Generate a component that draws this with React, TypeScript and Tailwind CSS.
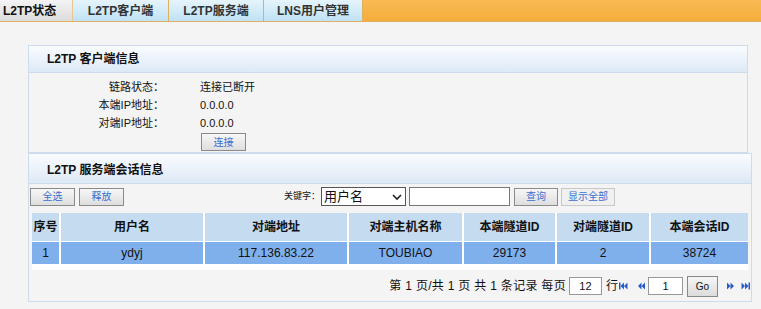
import React from "react";

const font = { fontFamily: '"Liberation Sans", "Noto Sans CJK SC", sans-serif' };

function Btn({ children, w, light }: { children: React.ReactNode; w: string; light?: boolean }) {
  return (
    <div
      className={`${w} h-[18px] flex items-center justify-center text-[10px] text-[#3a6fd0] border ${
        light ? "border-[#c8c8c8] bg-[#f0f0f0]" : "border-[#8a8a8a] bg-gradient-to-b from-[#f7f7f7] to-[#dedede]"
      }`}
    >
      {children}
    </div>
  );
}

function NavIcon({ kind }: { kind: "first" | "prev" | "next" | "last" }) {
  const c = "#2a5cc8";
  return (
    <svg width="9" height="8" viewBox="0 0 9 8">
      {kind === "first" && (
        <>
          <rect x="0" y="0.5" width="1.5" height="7" fill={c} />
          <path d="M5 0.5 L1.5 4 L5 7.5Z M8.5 0.5 L5 4 L8.5 7.5Z" fill={c} />
        </>
      )}
      {kind === "prev" && <path d="M4.5 0.5 L1 4 L4.5 7.5Z M8 0.5 L4.5 4 L8 7.5Z" fill={c} />}
      {kind === "next" && <path d="M1 0.5 L4.5 4 L1 7.5Z M4.5 0.5 L8 4 L4.5 7.5Z" fill={c} />}
      {kind === "last" && (
        <>
          <path d="M0.5 0.5 L4 4 L0.5 7.5Z M4 0.5 L7.5 4 L4 7.5Z" fill={c} />
          <rect x="7.5" y="0.5" width="1.5" height="7" fill={c} />
        </>
      )}
    </svg>
  );
}

export default function App() {
  const cols = [
    { w: "w-[29px]", t: "序号" },
    { w: "w-[144px]", t: "用户名" },
    { w: "w-[144px]", t: "对端地址" },
    { w: "w-[115px]", t: "对端主机名称" },
    { w: "w-[93px]", t: "本端隧道ID" },
    { w: "w-[94px]", t: "对端隧道ID" },
    { w: "flex-1", t: "本端会话ID" },
  ];
  const row = ["1", "ydyj", "117.136.83.22", "TOUBIAO", "29173", "2", "38724"];
  return (
    <div className="w-[761px] h-[309px] bg-[#f4f4f4] overflow-hidden text-[12px] text-[#111]" style={font}>
      {/* tabs */}
      <div className="flex h-[22px] border-b border-[#e0b060] bg-gradient-to-b from-[#f8ba52] to-[#f5ae3c]">
        <div className="w-[73px] flex items-center pl-[3px] font-bold text-[12px] bg-gradient-to-b from-[#f4f4f4] to-[#dcdcdc] border-r border-[#e8c890]">
          L2TP状态
        </div>
        {[
          ["w-[96px]", "L2TP客户端"],
          ["w-[95px]", "L2TP服务端"],
          ["w-[99px]", "LNS用户管理"],
        ].map(([w, t]) => (
          <div
            key={t}
            className={`${w} flex items-center justify-center font-bold text-[12px] text-[#333] bg-gradient-to-b from-[#e6f4fc] to-[#bfe2f4] border-r border-[#e0b060]`}
          >
            {t}
          </div>
        ))}
      </div>

      <div className="pl-[28px] pt-[23px]">
        {/* panel 1 */}
        <div className="mr-[13px] h-[108px] border border-[#cddcec] flex flex-col">
          <div className="h-[27px] flex items-center pl-[18px] font-bold text-[12px] bg-gradient-to-b from-[#fafcfe] to-[#dde9f7] border-b border-[#cddcec]">
            L2TP 客户端信息
          </div>
          <div className="pt-[5px] text-[11px]">
            {[
              ["链路状态：", "连接已断开"],
              ["本端IP地址：", "0.0.0.0"],
              ["对端IP地址：", "0.0.0.0"],
            ].map(([a, b]) => (
              <div key={a} className="flex h-[18px] items-center">
                <div className="w-[135px] text-right">{a}</div>
                <div className="pl-[36px]">{b}</div>
              </div>
            ))}
            <div className="pl-[172px] pt-[1px]">
              <Btn w="w-[45px]">连接</Btn>
            </div>
          </div>
        </div>

        {/* panel 2 */}
        <div className="mr-[9px] h-[149px] border border-[#cddcec] flex flex-col">
          <div className="h-[30px] flex items-center pl-[18px] pt-[2px] font-bold text-[12px] bg-gradient-to-b from-[#fafcfe] to-[#dde9f7] border-b border-[#cddcec]">
            L2TP 服务端会话信息
          </div>
          <div className="flex items-center h-[25px] pl-[1px]">
            <Btn w="w-[45px]">全选</Btn>
            <div className="w-[4px]" />
            <Btn w="w-[45px]">释放</Btn>
            <div className="ml-[160px] text-[9px]">关键字：</div>
            <div className="ml-[1px] w-[85px] h-[19px] border border-[#555] bg-white flex items-center justify-between px-[2px] text-[13px]">
              <span>用户名</span>
              <svg width="12" height="8" viewBox="0 0 12 8">
                <path d="M2 2 L6 6 L10 2" stroke="#222" strokeWidth="1.6" fill="none" />
              </svg>
            </div>
            <div className="ml-[3px] w-[101px] h-[19px] border border-[#777] bg-white" />
            <div className="ml-[4px]">
              <Btn w="w-[44px]">查询</Btn>
            </div>
            <div className="ml-[3px]">
              <Btn w="w-[54px]" light>
                显示全部
              </Btn>
            </div>
          </div>
          <div className="mx-[3px] mt-[4px] bg-white pb-[6px]">
            <div className="flex h-[28px] bg-[#c5dbef]">
              {cols.map((c, i) => (
                <div
                  key={i}
                  className={`${c.w} flex items-center justify-center font-bold text-[12px] ${i < 6 ? "border-r-2 border-white" : ""}`}
                >
                  {c.t}
                </div>
              ))}
            </div>
            <div className="flex h-[23px] bg-[#7fb0ec] border-t border-white">
              {cols.map((c, i) => (
                <div
                  key={i}
                  className={`${c.w} flex items-center justify-center text-[12px] ${i < 6 ? "border-r-2 border-white" : ""}`}
                >
                  {row[i]}
                </div>
              ))}
            </div>
          </div>
          <div className="flex items-center justify-end h-[24px] mt-[4px] pr-[1px] text-[12px]">
            <span className="tracking-[0.3px]">第 1 页/共 1 页 共 1 条记录 每页</span>
            <div className="ml-[3px] w-[33px] h-[18px] border border-[#999] bg-white flex items-center justify-center text-[11px]">12</div>
            <span className="ml-[4px]">行</span>
            <span className="ml-[1px] flex"><NavIcon kind="first" /></span>
            <span className="ml-[9px] flex"><NavIcon kind="prev" /></span>
            <div className="ml-[2px] w-[35px] h-[18px] border border-[#999] bg-white flex items-center justify-center text-[11px]">1</div>
            <div className="ml-[4px] w-[31px] h-[21px] border border-[#888] bg-gradient-to-b from-[#f6f6f6] to-[#dcdcdc] flex items-center justify-center text-[10px]">Go</div>
            <span className="ml-[8px] flex"><NavIcon kind="next" /></span>
            <span className="ml-[6px] flex"><NavIcon kind="last" /></span>
          </div>
        </div>
      </div>
    </div>
  );
}
